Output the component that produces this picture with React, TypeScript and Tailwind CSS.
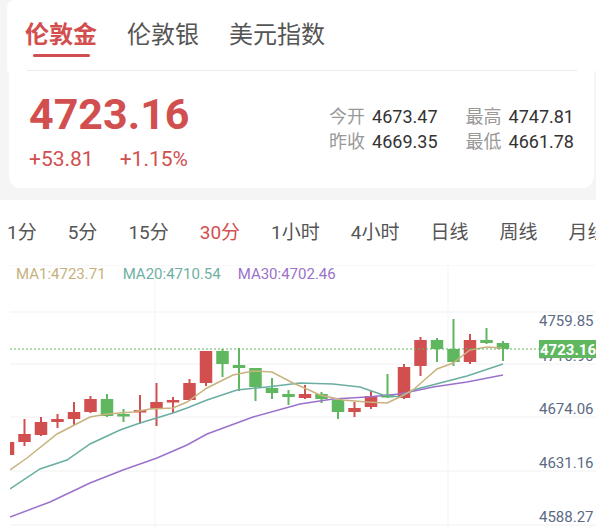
const FONT = 'Roboto, "Noto Sans CJK SC", sans-serif';

const topTabs = [
  { label: '伦敦金', active: true },
  { label: '伦敦银', active: false },
  { label: '美元指数', active: false },
];

const periods = ['1分', '5分', '15分', '30分', '1小时', '4小时', '日线', '周线', '月线'];

// [bodyTop, bodyBottom, wickTop, wickBottom, rising]
const candles: [number, number, number, number, boolean][] = [
  [442, 455, 440, 458, true],
  [434, 442, 419, 446, true],
  [422, 435, 417, 436, true],
  [419, 422, 414, 428, true],
  [412, 419, 402, 425, true],
  [399, 412, 396, 413, true],
  [399, 416, 394, 417, false],
  [414, 416, 409, 422, false],
  [410, 412, 395, 424, true],
  [402, 409, 383, 426, true],
  [400, 402, 397, 413, true],
  [383, 400, 379, 401, true],
  [351, 383, 351, 386, true],
  [351, 364, 349, 377, false],
  [365, 368, 348, 391, false],
  [368, 387, 368, 401, false],
  [388, 393, 378, 399, false],
  [394, 397, 390, 405, false],
  [394, 398, 385, 399, true],
  [394, 399, 392, 403, false],
  [400, 412, 400, 419, false],
  [408, 412, 402, 417, true],
  [396, 407, 391, 409, true],
  [395, 397, 374, 398, false],
  [367, 398, 364, 399, true],
  [340, 366, 337, 376, true],
  [340, 349, 338, 362, false],
  [349, 362, 319, 366, false],
  [340, 362, 334, 364, true],
  [340, 343, 328, 344, false],
  [343, 349, 341, 361, false],
];

const ma1 =
  '10,470 27,458 57,434 90,417 107,414 133,412 150,409 173,408 187,402 207,388 233,375 253,371 272,372 293,383 300,386 320,395 343,400 367,402 387,403 400,397 413,390 437,369 453,363 470,350 487,347 502,348';
const ma20 =
  '10,489 40,469 67,460 90,444 120,430 140,423 173,413 187,408 207,400 237,390 267,387 300,383 333,384 360,387 383,395 400,397 413,390 440,383 467,376 503,364';
const ma30 =
  '10,517 50,502 90,483 123,470 157,458 187,445 207,434 253,417 300,404 333,399 367,397 400,394 433,387 467,382 503,375';

const RED = '#d24f4f';
const GREEN = '#5fb85f';

function Chart() {
  return (
    <svg width={596} height={263} viewBox="0 265 596 263" className="block">
      <defs>
        <clipPath id="plot">
          <rect x={10} y={265} width={586} height={263} />
        </clipPath>
      </defs>
      {[265, 312, 364, 417, 471, 525].map((y) => (
        <line key={y} x1={10} x2={596} y1={y} y2={y} stroke="#f1f1f1" strokeWidth={1} />
      ))}
      {[155, 448].map((x) => (
        <line key={x} x1={x} x2={x} y1={265} y2={528} stroke="#f3f3f3" strokeWidth={1} />
      ))}
      <g clipPath="url(#plot)">
        {candles.map(([bt, bb, wt, wb, up], i) => {
          const cx = 8 + i * 16.5;
          const c = up ? RED : GREEN;
          return (
            <g key={i}>
              <rect x={cx - 1} y={wt} width={2} height={wb - wt} fill={c} />
              <rect x={cx - 6.25} y={bt} width={12.5} height={Math.max(bb - bt, 2.5)} fill={c} />
            </g>
          );
        })}
        <polyline points={ma30} fill="none" stroke="#9b72cb" strokeWidth={1.5} />
        <polyline points={ma20} fill="none" stroke="#6aaea2" strokeWidth={1.5} />
        <polyline points={ma1} fill="none" stroke="#c9b27e" strokeWidth={1.5} />
      </g>
      <line x1={10} x2={539} y1={349} y2={349} stroke={GREEN} strokeWidth={1} strokeDasharray="2 2" />
      <g fontFamily={FONT} fontSize={15} fill="#5b6a84">
        <text x={539} y={326}>4759.85</text>
        <text x={539} y={361}>4716.96</text>
        <text x={539} y={414}>4674.06</text>
        <text x={539} y={468}>4631.16</text>
        <text x={539} y={522}>4588.27</text>
      </g>
      <rect x={539} y={340} width={57} height={18} fill={GREEN} />
      <text x={540} y={355} fontFamily={FONT} fontSize={15} fontWeight={700} fill="#ffffff">
        4723.16
      </text>
    </svg>
  );
}

export default function App() {
  return (
    <div className="w-[596px] h-[528px] overflow-hidden bg-[#f5f5f5]" style={{ fontFamily: FONT }}>
      <div className="ml-[7px] h-[71px] bg-white rounded-tl-lg flex flex-col">
        <div className="flex gap-[30px] pl-[18px] pt-[23px]">
          {topTabs.map((t) => (
            <div key={t.label} className="flex flex-col items-center">
              <span
                className={`text-[24px] leading-none ${
                  t.active ? 'font-bold text-[#d24f4f]' : 'text-[#555555]'
                }`}
              >
                {t.label}
              </span>
              {t.active && <span className="mt-[7px] h-[3px] w-[57px] rounded-full bg-[#d24f4f]" />}
            </div>
          ))}
        </div>
        <div className="mt-auto ml-[20px] mr-[19px] h-px bg-[#ebebeb]" />
      </div>

      <div className="ml-[9px] mr-[2px] h-[117px] bg-white rounded-b-xl flex justify-between">
        <div className="pl-[20px] pt-[22px] text-[#d24f4f]">
          <div className="text-[43px] leading-none font-bold">4723.16</div>
          <div className="mt-[13px] flex gap-[26px] text-[21px] leading-none">
            <span>+53.81</span>
            <span>+1.15%</span>
          </div>
        </div>
        <div className="pt-[33px] pr-[20px] flex gap-[28px] text-[18px] leading-[25px]">
          <div className="flex flex-col">
            <div className="flex gap-[7px]">
              <span className="text-[#999999]">今开</span>
              <span className="text-[#333333]">4673.47</span>
            </div>
            <div className="flex gap-[7px]">
              <span className="text-[#999999]">昨收</span>
              <span className="text-[#333333]">4669.35</span>
            </div>
          </div>
          <div className="flex flex-col">
            <div className="flex gap-[7px]">
              <span className="text-[#999999]">最高</span>
              <span className="text-[#333333]">4747.81</span>
            </div>
            <div className="flex gap-[7px]">
              <span className="text-[#999999]">最低</span>
              <span className="text-[#333333]">4661.78</span>
            </div>
          </div>
        </div>
      </div>

      <div className="mt-[12px] bg-white h-[328px]">
        <div className="h-[65px] flex items-center gap-[31px] pl-[7px] whitespace-nowrap overflow-hidden">
          {periods.map((p) => (
            <span
              key={p}
              className={`shrink-0 text-[19px] leading-none ${p === '30分' ? 'text-[#d24f4f]' : 'text-[#555555]'}`}
            >
              {p}
            </span>
          ))}
        </div>
        <div className="relative">
          <Chart />
          <div className="absolute left-[16px] top-[2px] flex gap-[17px] text-[15px] leading-none">
            <span className="text-[#c6b17c]">MA1:4723.71</span>
            <span className="text-[#6fb0a3]">MA20:4710.54</span>
            <span className="text-[#9a72c9]">MA30:4702.46</span>
          </div>
        </div>
      </div>
    </div>
  );
}
